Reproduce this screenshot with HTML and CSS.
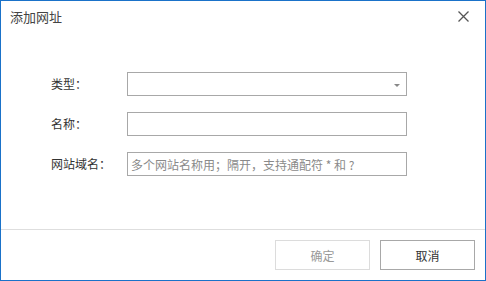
FILE: index.html
```html
<!DOCTYPE html>
<html lang="zh-CN">
<head>
<meta charset="utf-8">
<title>添加网址</title>
<link rel="stylesheet" href="styles.css">
</head>
<body>
<div class="dialog">
  <div class="header">
    <span class="title">添加网址</span>
    <span class="close" aria-label="关闭">
      <svg width="11" height="11" viewBox="0 0 11 11"><path d="M0.5 0.5 L10.5 10.5 M10.5 0.5 L0.5 10.5" stroke="#555" stroke-width="1.3" fill="none"/></svg>
    </span>
  </div>
  <div class="body">
    <div class="form">
      <label class="label">类型：</label>
      <div class="input select"><span class="arrow"></span></div>
      <label class="label">名称：</label>
      <div class="input"></div>
      <label class="label">网站域名：</label>
      <div class="input"><span class="placeholder">多个网站名称用；隔开，支持通配符 * 和 ?</span></div>
    </div>
  </div>
  <div class="footer">
    <button class="btn btn-disabled">确定</button>
    <button class="btn">取消</button>
  </div>
</div>
</body>
</html>
```
FILE: styles.css
```css
html, body {
  margin: 0;
  padding: 0;
  background: #fff;
}
body {
  font-family: "Noto Sans CJK SC", "Noto Sans", sans-serif;
  color: #333;
  font-size: 12px;
}
.dialog {
  box-sizing: border-box;
  width: 486px;
  height: 281px;
  border: 1px solid #1a72c9;
  display: flex;
  flex-direction: column;
  background: #fff;
}
.header {
  height: 30px;
  display: flex;
  align-items: center;
  justify-content: space-between;
  padding: 0 16px 0 9px;
}
.title {
  font-size: 13px;
  color: #444;
}
.close {
  display: flex;
  width: 11px;
  height: 11px;
  margin-top: 0px;
}
.body {
  flex: 1;
  padding: 41px 0 0 50px;
}
.form {
  display: grid;
  grid-template-columns: 76px 280px;
  grid-auto-rows: 24px;
  row-gap: 16px;
  align-items: center;
}
.label {
  color: #333;
  font-size: 12px;
  line-height: 24px;
}
.input {
  box-sizing: border-box;
  height: 24px;
  border: 1px solid #a8a8a8;
  position: relative;
  display: flex;
  align-items: center;
  padding-left: 3px;
}
.placeholder {
  color: #8a8a8a;
  font-size: 12px;
  white-space: nowrap;
}
.arrow {
  position: absolute;
  right: 6px;
  top: 11px;
  width: 0;
  height: 0;
  border-left: 3px solid transparent;
  border-right: 3px solid transparent;
  border-top: 3px solid #888;
}
.footer {
  border-top: 1px solid #dedede;
  padding: 10px;
  display: flex;
  justify-content: flex-end;
  gap: 10px;
}
.btn {
  box-sizing: border-box;
  width: 95px;
  height: 30px;
  background: #fff;
  border: 1px solid #a8a8a8;
  font-family: "Noto Sans CJK SC", "Noto Sans", sans-serif;
  font-size: 12px;
  color: #333;
  padding: 0;
}
.btn-disabled {
  border-color: #dcdcdc;
  color: #999;
}
```
